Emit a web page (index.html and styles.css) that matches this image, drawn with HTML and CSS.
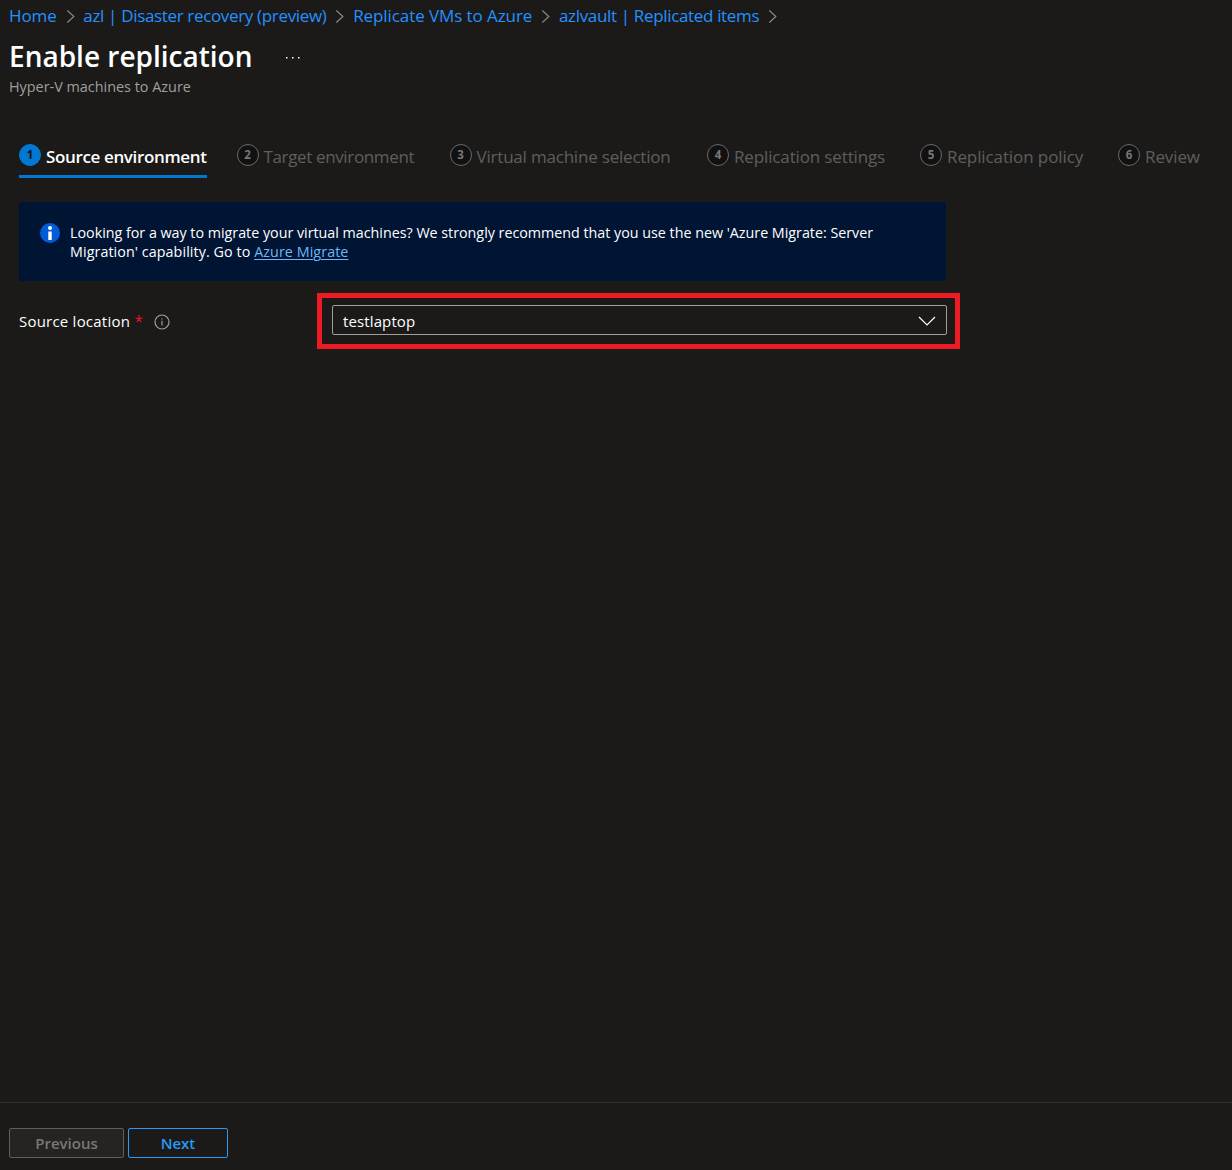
FILE: index.html
```html
<!DOCTYPE html>
<html lang="en">
<head>
<meta charset="utf-8">
<title>Enable replication</title>
<link rel="stylesheet" href="styles.css">
</head>
<body>
<div class="page">
  <nav class="crumbs">
    <a class="crumb-home">Home</a>
    <svg class="sep" viewBox="0 0 26 14"><path d="M10 1.5 16.5 7.5 10 13.5"/></svg>
    <a class="crumb-tight">azl | Disaster recovery (preview)</a>
    <svg class="sep" viewBox="0 0 26 14"><path d="M10 1.5 16.5 7.5 10 13.5"/></svg>
    <a>Replicate VMs to Azure</a>
    <svg class="sep" viewBox="0 0 26 14"><path d="M10 1.5 16.5 7.5 10 13.5"/></svg>
    <a class="crumb-tight">azlvault | Replicated items</a>
    <svg class="sep" viewBox="0 0 26 14"><path d="M10 1.5 16.5 7.5 10 13.5"/></svg>
  </nav>
  <header class="heading">
    <div class="title-row">
      <h1>Enable replication</h1>
      <svg class="more" viewBox="0 0 16 4"><path d="M1 1h1.5v1.5H1zM7 1h1.5v1.5H7zM13 1h1.5v1.5H13z"/></svg>
    </div>
    <p class="subtitle">Hyper-V machines to Azure</p>
  </header>
  <ol class="steps">
    <li class="step active"><span class="num">1</span><span class="name">Source environment</span></li>
    <li class="step"><span class="num">2</span><span class="name">Target environment</span></li>
    <li class="step"><span class="num">3</span><span class="name medium">Virtual machine selection</span></li>
    <li class="step"><span class="num">4</span><span class="name loose">Replication settings</span></li>
    <li class="step"><span class="num">5</span><span class="name looser">Replication policy</span></li>
    <li class="step"><span class="num">6</span><span class="name looser">Review</span></li>
  </ol>
  <main class="content">
    <section class="notice">
      <svg class="notice-icon" viewBox="0 0 20 20"><circle cx="10" cy="10" r="10" fill="#015cda"/><circle cx="10" cy="5" r="2" fill="#fff"/><path d="M8.3 8.5h3.4v8.5H8.3z" fill="#fff"/></svg>
      <p>Looking for a way to migrate your virtual machines? We strongly recommend that you use the new 'Azure Migrate: Server<br><span class="second">Migration' capability. Go to <a>Azure Migrate</a></span></p>
    </section>
    <div class="field">
      <div class="label">
        <span>Source location</span>
        <svg class="required" viewBox="0 0 8 8"><path d="M4 .3V4M4 4 .6 2.9M4 4l3.4-1.1M4 4 1.9 7M4 4l2.1 3"/></svg>
        <svg class="hint" viewBox="0 0 16 16"><circle cx="8" cy="8" r="7"/><path d="M8 6.8v4.7M8 4.4v1.2"/></svg>
      </div>
      <div class="highlight">
        <div class="select"><span>testlaptop</span><svg class="chevron" viewBox="0 0 18 10"><path d="m1 1 8 8 8-8"/></svg></div>
      </div>
    </div>
  </main>
  <footer class="footer">
    <button class="button disabled">Previous</button>
    <button class="button next">Next</button>
  </footer>
</div>
</body>
</html>
```
FILE: styles.css
```css
* { box-sizing: border-box; }
body {
  margin: 0;
  background: #1b1a19;
  color: #fff;
  font-family: "Open Sans", "Noto Sans", sans-serif;
}
h1, p, ol { margin: 0; padding: 0; }
svg { display: block; flex: none; }
.page { display: flex; flex-direction: column; height: 1170px; overflow: hidden; }
.crumbs {
  display: flex;
  align-items: center;
  height: 32px;
  padding: 0 0 2px 9px;
  color: #2491ff;
  font-size: 17px;
  letter-spacing: -0.08px;
  white-space: nowrap;
}
.crumb-home { letter-spacing: -0.1px; }
.crumb-tight { letter-spacing: -0.34px; }
.sep { width: 26.7px; height: 14px; margin-top: 1px; fill: none; stroke: #8f8d8b; stroke-width: 1.1; }
.heading { height: 112px; padding-left: 9px; }
.title-row { display: flex; align-items: center; gap: 33px; height: 48px; }
h1 { font-size: 28px; line-height: 48px; font-weight: 600; }
.more { width: 16px; height: 4px; margin-top: 4px; fill: #fff; }
.subtitle { margin-top: -3px; font-size: 14.4px; line-height: 20px; color: #a19f9d; }
.steps {
  display: grid;
  grid-template-columns: 217.5px 213px 257.5px 213px 198px 1fr;
  height: 35px;
  padding-left: 19px;
  list-style: none;
}
.step {
  display: flex;
  align-items: flex-start;
  justify-self: start;
  gap: 5px;
  height: 34px;
  font-size: 17px;
  line-height: 26px;
  letter-spacing: -0.36px;
  color: #605e5c;
  white-space: nowrap;
}
.step.active { width: 188px; color: #fff; font-weight: 600; border-bottom: 3px solid #0078d4; }
.medium { letter-spacing: -0.2px; }
.loose { letter-spacing: -0.14px; }
.looser { letter-spacing: -0.1px; }
.num {
  width: 22px;
  height: 22px;
  margin-top: 0.4px;
  border: 1.5px solid #6b6967;
  border-radius: 50%;
  background: #111;
  color: #797775;
  font-size: 11.5px;
  line-height: 19px;
  font-weight: 700;
  letter-spacing: 0;
  text-align: center;
}
.active .num { border-color: #0078d4; background: #0078d4; color: #111; }
.content { flex: 1; padding: 23px 0 0 19px; }
.notice {
  display: flex;
  gap: 10px;
  width: 927px;
  height: 79px;
  padding: 21px 20px;
  border-radius: 3px;
  background: #001433;
}
.notice-icon { width: 20px; height: 20px; margin-left: 1px; }
.notice p { font-size: 14.3px; line-height: 19px; letter-spacing: -0.01px; white-space: nowrap; }
.notice .second { letter-spacing: 0.08px; }
.notice a { color: #6cb8f6; text-decoration: underline; text-underline-offset: 2px; text-decoration-thickness: 1px; }
.field { display: flex; padding-top: 12px; }
.label { display: flex; align-items: center; width: 298px; height: 56px; font-size: 15px; letter-spacing: 0.22px; }
.required { width: 8px; height: 8px; margin: -4px 0 0 5px; fill: none; stroke: #e81123; stroke-width: 1.3; }
.hint { width: 16px; height: 16px; margin: 1px 0 0 11px; fill: none; stroke: #a19f9d; stroke-width: 1.2; }
.highlight { width: 643px; height: 56px; padding: 7px 8px 0 10px; border: 5px solid #ed1c24; }
.select {
  display: flex;
  align-items: center;
  justify-content: space-between;
  height: 30px;
  padding: 1px 10px 0;
  border: 1px solid #a19f9d;
  border-radius: 2px;
  font-size: 15px;
  letter-spacing: 0.12px;
}
.chevron { width: 18px; height: 10px; fill: none; stroke: #fff; stroke-width: 1.2; }
.footer { display: flex; gap: 4px; height: 68px; padding: 25px 9px 0; border-top: 1px solid #323130; }
.button {
  height: 30px;
  padding: 0;
  border: 1px solid #605e5c;
  border-radius: 2px;
  background: transparent;
  font: 600 15px/26px "Open Sans", "Noto Sans", sans-serif;
}
.disabled { width: 115px; background: #252423; color: #797775; }
.next { width: 100px; border-color: #2899f5; color: #2899f5; }
```
